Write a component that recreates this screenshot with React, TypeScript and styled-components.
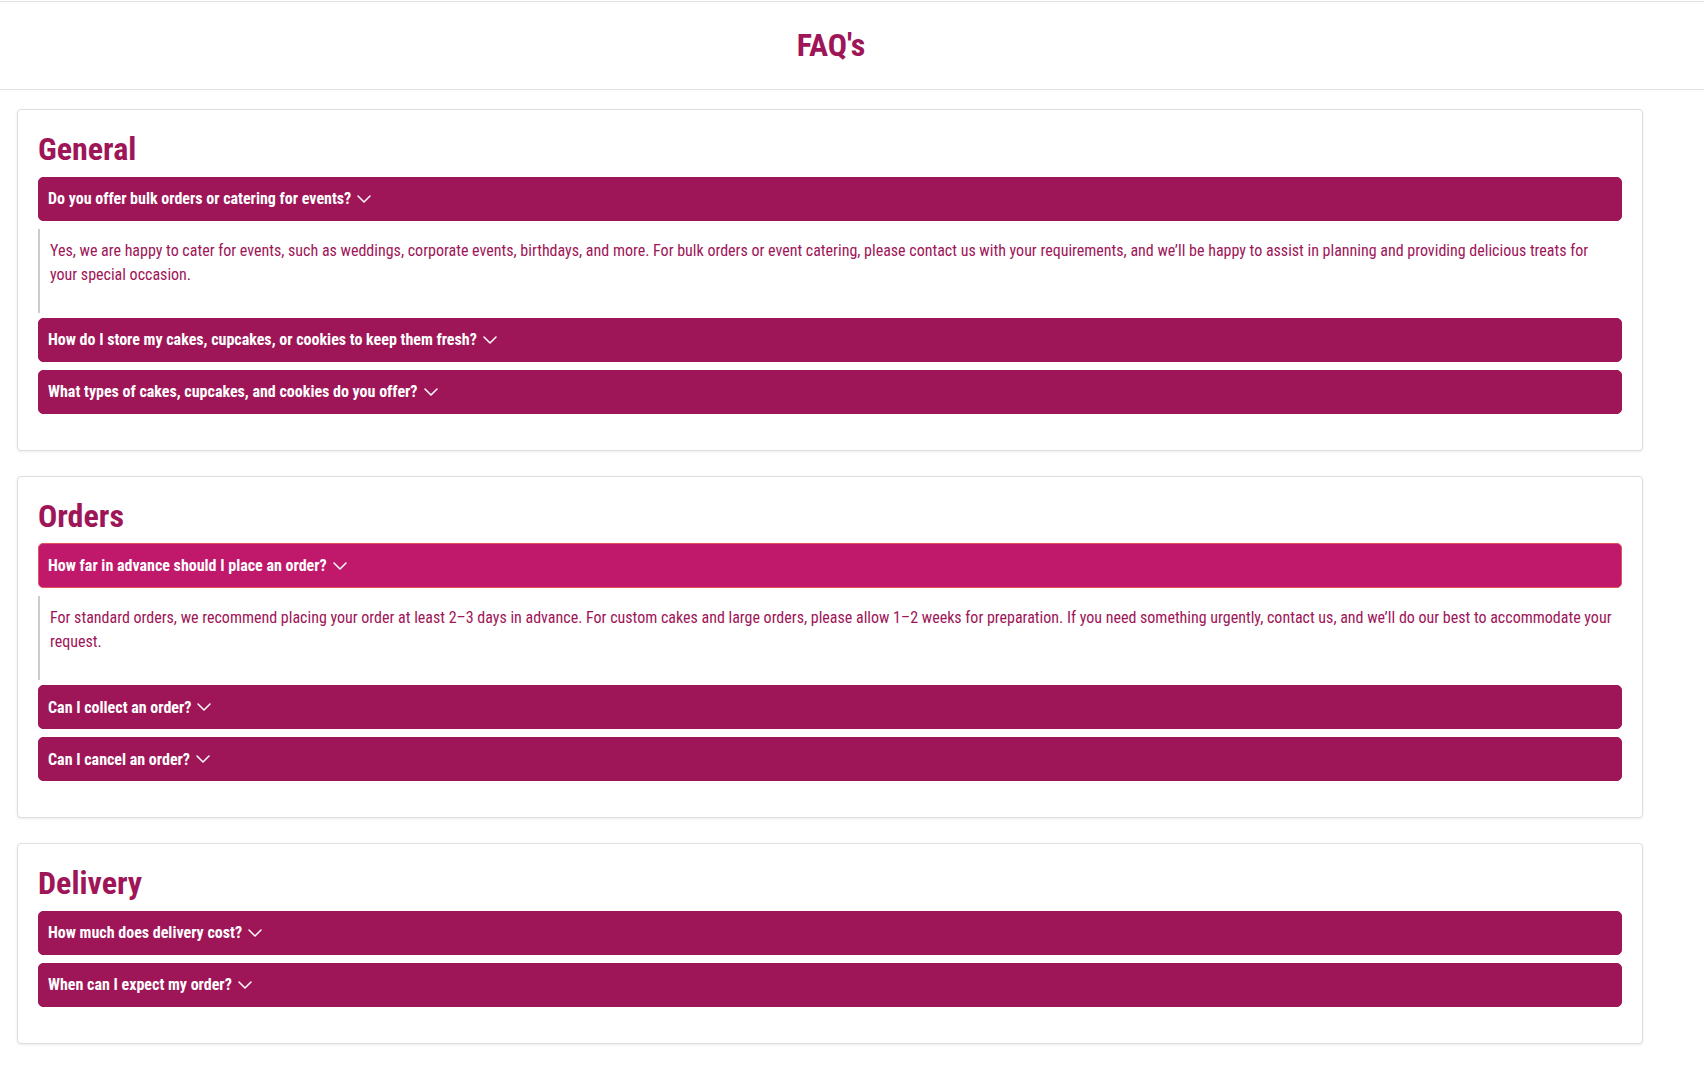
import React, { useState } from 'react'
import styled, { createGlobalStyle } from 'styled-components'

const COLORS = {
  plum: '#9e1558',
  magenta: '#c0186b',
  focus: '#e0545a',
  line: '#e2e2e2',
  cardBorder: '#dedede',
  quote: '#cccccc',
}

const FONT = `"Roboto Condensed", "Liberation Sans Narrow", "DejaVu Sans Condensed", Roboto, sans-serif`

const GlobalStyle = createGlobalStyle`
  * { box-sizing: border-box; }
  body {
    margin: 0;
    background: #fff;
    font-family: ${FONT};
  }
`

type Faq = { q: string; a?: string }
type Section = { title: string; items: Faq[] }

const SECTIONS: Section[] = [
  {
    title: 'General',
    items: [
      {
        q: 'Do you offer bulk orders or catering for events?',
        a: 'Yes, we are happy to cater for events, such as weddings, corporate events, birthdays, and more. For bulk orders or event catering, please contact us with your requirements, and we’ll be happy to assist in planning and providing delicious treats for your special occasion.',
      },
      { q: 'How do I store my cakes, cupcakes, or cookies to keep them fresh?' },
      { q: 'What types of cakes, cupcakes, and cookies do you offer?' },
    ],
  },
  {
    title: 'Orders',
    items: [
      {
        q: 'How far in advance should I place an order?',
        a: 'For standard orders, we recommend placing your order at least 2–3 days in advance. For custom cakes and large orders, please allow 1–2 weeks for preparation. If you need something urgently, contact us, and we’ll do our best to accommodate your request.',
      },
      { q: 'Can I collect an order?' },
      { q: 'Can I cancel an order?' },
    ],
  },
  {
    title: 'Delivery',
    items: [{ q: 'How much does delivery cost?' }, { q: 'When can I expect my order?' }],
  },
]

const StyledHeader = styled.header`
  margin-top: 1px;
  border-top: 1px solid ${COLORS.line};
  border-bottom: 1px solid ${COLORS.line};
  padding: 24px 0 25px;
`

const StyledPageTitle = styled.h1`
  width: 1662px;
  margin: 0;
  text-align: center;
  font-size: 32px;
  line-height: 1.2;
  font-weight: 700;
  color: ${COLORS.plum};
`

const StyledMain = styled.main`
  width: 1660px;
  padding: 19px 17px 24px;
  display: flex;
  flex-direction: column;
  gap: 25px;
`

const StyledCard = styled.section`
  border: 1px solid ${COLORS.cardBorder};
  border-radius: 4px;
  box-shadow: 0 1px 3px rgba(0, 0, 0, 0.08);
  padding: 20px 20px 28px;
  background: #fff;
`

const StyledSectionTitle = styled.h2`
  margin: 0 0 8px;
  font-size: 32px;
  line-height: 1.2;
  font-weight: 700;
  color: ${COLORS.plum};
`

const StyledList = styled.div`
  display: flex;
  flex-direction: column;
`

const StyledQuestion = styled.button<{ $open: boolean }>`
  display: flex;
  align-items: center;
  gap: 6px;
  width: 100%;
  height: ${(p) => (p.$open ? '45px' : '44px')};
  margin-bottom: 8px;
  padding: 0 9px;
  border: 1px solid ${(p) => (p.$open ? COLORS.focus : COLORS.plum)};
  border-radius: 5px;
  background: ${(p) => (p.$open ? COLORS.magenta : COLORS.plum)};
  color: #fff;
  font-family: ${FONT};
  font-size: 16px;
  font-weight: 700;
  text-align: left;
  cursor: pointer;
`

const StyledAnswer = styled.div`
  margin-bottom: 5px;
  padding: 10px;
  border-left: 2px solid ${COLORS.quote};
  color: ${COLORS.plum};
  font-size: 16px;
  line-height: 24px;

  p {
    margin: 0 0 16px;
  }
`

const Chevron = () => (
  <svg width="14" height="8" viewBox="0 0 14 8" fill="none">
    <polyline points="1,1 7,7 13,1" stroke="#fff" strokeWidth="1.5" strokeLinejoin="round" strokeLinecap="round" />
  </svg>
)

const FaqSection = ({ section }: { section: Section }) => {
  const [open, setOpen] = useState<number | null>(section.items.findIndex((i) => i.a))
  return (
    <StyledCard>
      <StyledSectionTitle>{section.title}</StyledSectionTitle>
      <StyledList>
        {section.items.map((item, idx) => (
          <React.Fragment key={item.q}>
            <StyledQuestion
              type="button"
              $open={open === idx && section.title === 'Orders'}
              onClick={() => setOpen(open === idx ? null : idx)}
            >
              {item.q}
              <Chevron />
            </StyledQuestion>
            {open === idx && item.a && (
              <StyledAnswer>
                <p>{item.a}</p>
              </StyledAnswer>
            )}
          </React.Fragment>
        ))}
      </StyledList>
    </StyledCard>
  )
}

export default function App() {
  return (
    <>
      <GlobalStyle />
      <StyledHeader>
        <StyledPageTitle>FAQ's</StyledPageTitle>
      </StyledHeader>
      <StyledMain>
        {SECTIONS.map((s) => (
          <FaqSection key={s.title} section={s} />
        ))}
      </StyledMain>
    </>
  )
}
